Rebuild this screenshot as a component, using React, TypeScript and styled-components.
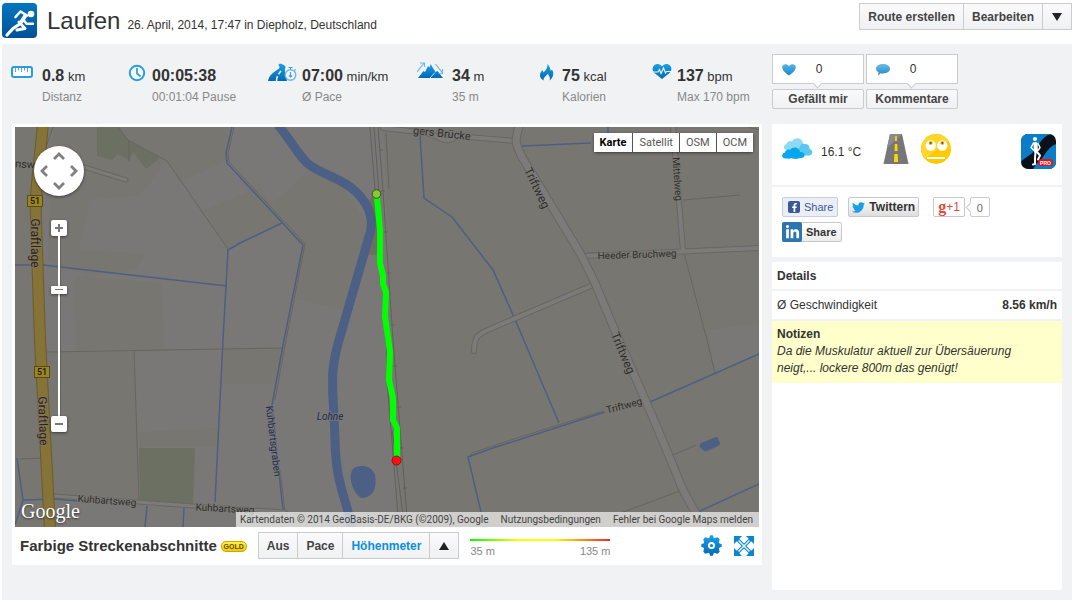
import React, { useState } from "react";
import styled, { createGlobalStyle, css } from "styled-components";
import { FaFacebookF, FaLinkedinIn, FaTwitter } from "react-icons/fa";

const GlobalStyle = createGlobalStyle`
  * { box-sizing: border-box; }
  body {
    margin: 0;
    background: #fff;
    color: #333;
    font: 12px/16px "Liberation Sans", Arial, sans-serif;
  }
  button, input { font: inherit; color: inherit; margin: 0; }
  button { cursor: pointer; }
  h1, h2, p, dl, dd, dt { margin: 0; }
  a { color: inherit; text-decoration: none; }
  svg { display: block; flex: none; }
`;

const Page = styled.div`
  padding: 0 2px 2px;
`;

const Header = styled.header`
  display: flex;
  align-items: flex-start;
  height: 44px;
  padding-top: 3px;
`;

const Title = styled.div`
  display: flex;
  align-items: baseline;
  flex: 1;
  gap: 7px;
  padding: 4px 0 0 10px;
  white-space: nowrap;

  h1 {
    font-size: 24px;
    line-height: 28px;
    font-weight: normal;
  }
`;

const ButtonGroup = styled.div`
  display: flex;
`;

const GroupButton = styled.button<{ $active?: boolean }>`
  height: 27px;
  padding: 0 8px;
  border: 1px solid #ccc;
  background: linear-gradient(#fafafb, #f0f1f3);
  color: ${(p) => (p.$active ? "#0d8fdc" : "#444")};
  font-weight: bold;
  white-space: nowrap;

  & + & { margin-left: -1px; }
`;

const ArrowButton = styled(GroupButton)`
  width: 30px;
  padding: 0 9px;
`;

const Body = styled.main`
  padding: 10px;
  background: #f1f2f4;
`;

const Summary = styled.div`
  display: flex;
  gap: 10px;
  height: 70px;
`;

const Stats = styled.dl`
  display: grid;
  flex: 1;
  grid-template-columns: 110fr 150fr 150fr 110fr 115fr 120fr;
  margin-left: -5px;
  padding-top: 8px;
`;

const StatItem = styled.div`
  display: grid;
  grid-template-columns: 30px 1fr;
  column-gap: 5px;
  align-content: start;
  white-space: nowrap;

  svg { grid-row: 1 / 3; }
`;

const StatValue = styled.dd`
  padding-top: 2px;
  font-size: 13px;
  line-height: 24px;

  strong { font-size: 16px; }
`;

const StatLabel = styled.dt`
  grid-column: 2;
  grid-row: 2;
  color: #888;
  line-height: 16px;
`;

const Reactions = styled.div`
  display: flex;
  gap: 2px;
  width: 290px;
`;

const Reaction = styled.div`
  display: flex;
  flex-direction: column;
  gap: 5px;
  width: 92px;
`;

const CountBox = styled.div`
  position: relative;
  display: flex;
  align-items: center;
  height: 30px;
  padding-left: 9px;
  border: 1px solid #ccc;
  background: #fff;

  span {
    width: 46px;
    text-align: center;
  }

  &::after {
    content: "";
    position: absolute;
    left: 41px;
    bottom: -4px;
    width: 6px;
    height: 6px;
    transform: rotate(45deg);
    border: solid #ccc;
    border-width: 0 1px 1px 0;
    background: #fff;
  }
`;

const ReactionButton = styled.button`
  height: 20px;
  padding: 0;
  border: 1px solid #ccc;
  border-radius: 2px;
  background: linear-gradient(#fafafb, #f0f1f3);
  color: #444;
  font-weight: bold;
`;

const Columns = styled.div`
  display: flex;
  align-items: flex-start;
  gap: 10px;
`;

const MapCard = styled.section`
  flex: 1;
  min-width: 0;
  padding: 3px;
  background: #fff;
`;

const MapFrame = styled.div`
  position: relative;
  overflow: hidden;
  font-family: Roboto, sans-serif;

  > svg {
    width: 100%;
    height: 400px;
  }
`;

const PanControl = styled.div`
  position: absolute;
  left: 19px;
  top: 19px;
  display: grid;
  grid-template: repeat(3, 15px) / repeat(3, 15px);
  place-content: center;
  place-items: center;
  width: 50px;
  height: 50px;
  border-radius: 50%;
  background: #fff;
  box-shadow: 0 1px 3px rgba(0, 0, 0, 0.5);
`;

const PanButton = styled.button<{ $area: string }>`
  grid-area: ${(p) => p.$area};
  padding: 0;
  border: 0;
  background: none;
`;

const ZoomControl = styled.div`
  position: absolute;
  left: 36px;
  top: 93px;
  display: flex;
  flex-direction: column;
  width: 16px;
`;

const ZoomButton = styled.button`
  display: grid;
  place-items: center;
  width: 16px;
  height: 16px;
  padding: 0;
  border: 0;
  border-radius: 2px;
  background: #fff;
  box-shadow: 0 1px 3px rgba(0, 0, 0, 0.5);
`;

const ZoomSlider = styled.input`
  appearance: none;
  writing-mode: vertical-lr;
  direction: rtl;
  width: 16px;
  height: 180px;
  background: linear-gradient(90deg, transparent 7px, #fff 7px 9px, #64625e 9px 10px, transparent 10px);

  &::-webkit-slider-thumb {
    appearance: none;
    width: 16px;
    height: 8px;
    border-radius: 1px;
    background: linear-gradient(#777, #777) center / 8px 1px no-repeat #fff;
    box-shadow: 0 1px 3px rgba(0, 0, 0, 0.5);
  }
`;

const MapTypes = styled.div`
  position: absolute;
  right: 6px;
  top: 6px;
  display: flex;
  gap: 1px;
  border-radius: 2px;
  background: #55534f;
  box-shadow: 0 1px 3px rgba(0, 0, 0, 0.5);
`;

const MapType = styled.button<{ $active: boolean }>`
  height: 19px;
  padding: 0 6px;
  border: 0;
  background: #fff;
  color: ${(p) => (p.$active ? "#000" : "#565656")};
  font-size: 11px;
  font-weight: ${(p) => (p.$active ? "bold" : "normal")};
`;

const MapLogo = styled.a`
  position: absolute;
  left: 6px;
  bottom: 4px;
  color: #fff;
  font: 20px/24px "Liberation Serif", serif;
  text-shadow: 0 1px 2px #333;
`;

const Attribution = styled.div`
  position: absolute;
  right: 0;
  bottom: 0;
  display: flex;
  gap: 12px;
  height: 15px;
  padding: 0 6px 0 4px;
  background: rgba(245, 245, 245, 0.7);
  color: #444;
  font-size: 10px;
  line-height: 16px;
  white-space: nowrap;
`;

const MapFooter = styled.div`
  display: flex;
  align-items: center;
  padding: 5px 5px 3px;

  h2 {
    font-size: 15px;
    line-height: 20px;
    white-space: nowrap;
  }
`;

const GoldBadge = styled.span`
  width: 26px;
  height: 11px;
  margin: 2px 11px 0 4px;
  border: 1px solid #c9a800;
  border-radius: 5px;
  background: linear-gradient(#fff04a, #f2c800);
  color: #5d4c00;
  font-size: 7px;
  line-height: 9px;
  font-weight: bold;
  text-align: center;
`;

const Legend = styled.div`
  display: flex;
  flex-wrap: wrap;
  justify-content: space-between;
  width: 140px;
  margin: 5px auto 0 11px;
  color: #888;
  font-size: 11px;
  line-height: 14px;

  &::before {
    content: "";
    width: 100%;
    height: 2px;
    margin-bottom: 3px;
    background: linear-gradient(90deg, #0f0, #ff0 35%, #ff0 60%, #f22);
  }
`;

const IconButton = styled.button`
  margin-left: 12px;
  padding: 0;
  border: 0;
  background: none;
`;

const Sidebar = styled.aside`
  display: flex;
  flex-direction: column;
  width: 290px;
`;

const Panel = styled.section`
  background: #fff;
`;

const Conditions = styled(Panel)`
  display: flex;
  align-items: flex-start;
  height: 61px;
  margin-bottom: 2px;
  padding: 10px 6px 0 10px;
`;

const Temperature = styled.span`
  margin: 10px 22px 0 8px;
`;

const FaceWrap = styled.span`
  margin-left: 12px;
`;

const AppIcon = styled.a`
  margin-left: auto;
`;

const Share = styled(Panel)`
  display: flex;
  flex-wrap: wrap;
  align-content: flex-start;
  gap: 5px 10px;
  height: 70px;
  margin-bottom: 5px;
  padding: 10px;
`;

const shareColors = {
  facebook: css`
    padding: 0 4px 0 5px;
    border-color: #c3cfe8;
    background: #eceef5;
    color: #3b5998;
  `,
  twitter: css`
    padding: 0 3px;
    background: linear-gradient(#fff, #dedede);
    font-size: 12px;
    font-weight: bold;
  `,
  google: css`
    margin-left: 4px;
    padding: 0 4px;
    background: #fff;
    color: #dd4b39;
    font-size: 12px;
  `,
  linkedin: css`
    padding: 0 4px 0 0;
    background: linear-gradient(#fff, #ececec);
    font-weight: bold;
  `,
};

const ShareButton = styled.button<{ $kind: keyof typeof shareColors }>`
  display: flex;
  align-items: center;
  gap: 4px;
  height: 20px;
  border: 1px solid #c8c8c8;
  border-radius: 2px;
  font-size: 11px;
  line-height: 18px;
  ${(p) => shareColors[p.$kind]}
`;

const PlusOne = styled.div`
  display: flex;
  gap: 5px;
`;

const PlusMark = styled.span`
  font: bold 16px/16px "Liberation Serif", serif;

  & + span { margin-left: -4px; }
`;

const Bubble = styled.span`
  position: relative;
  width: 20px;
  height: 20px;
  border: 1px solid #ccc;
  border-radius: 2px;
  color: #666;
  font-size: 11px;
  line-height: 20px;
  text-align: center;

  &::before {
    content: "";
    position: absolute;
    left: -4px;
    top: 6px;
    width: 6px;
    height: 6px;
    transform: rotate(45deg);
    border: solid #ccc;
    border-width: 0 0 1px 1px;
    background: #fff;
  }
`;

const BrandTile = styled.span<{ $size: number; $color: string }>`
  display: grid;
  place-items: center;
  width: ${(p) => p.$size}px;
  height: ${(p) => p.$size}px;
  border-radius: 2px;
  background: ${(p) => p.$color};
  color: #fff;
`;

const LinkedInTile = styled(BrandTile)`
  margin: 0 0 0 -1px;
`;

const DetailsPanel = styled(Panel)`
  min-height: 328px;

  h2 {
    padding: 6px 5px 5px;
    border-bottom: 2px solid #f1f2f4;
    font-size: 12px;
    line-height: 16px;
  }
`;

const DetailRow = styled.dl`
  display: flex;
  justify-content: space-between;
  padding: 6px 5px;
  border-bottom: 2px solid #f1f2f4;

  dd { font-weight: bold; }
`;

const Notes = styled.div`
  padding: 5px 5px 6px;
  background: #ffffcb;
  line-height: 17px;

  p { width: 260px; font-style: italic; }
`;

const BLUE = "#0c86cf";

const BlueGradient = ({ id }: { id: string }) => (
  <linearGradient id={id} x1="0" y1="0" x2="0" y2="1">
    <stop offset="0" stopColor="#1ba0e6" />
    <stop offset="1" stopColor="#0368b4" />
  </linearGradient>
);

const RunnerLogo = () => (
  <svg width="35" height="35" viewBox="0 0 35 35" aria-hidden="true">
    <defs>
      <linearGradient id="logo" x1="0" y1="0" x2="0" y2="1">
        <stop offset="0" stopColor="#0277bd" />
        <stop offset="1" stopColor="#01509a" />
      </linearGradient>
    </defs>
    <rect width="35" height="35" rx="4" fill="url(#logo)" />
    <circle cx="29" cy="11" r="3.300" fill="#fff" />
    <g fill="none" stroke="#fff" strokeLinejoin="round">
      <path d="M13.500 14l5-5.500 6.500 4" strokeWidth="2.600" strokeLinecap="round" />
      <path d="M23.500 12.500l-4.500 7" strokeWidth="4" />
      <path d="M22.500 18l2 2.800H31" strokeWidth="2.400" strokeLinecap="round" />
      <path d="M17 19l6 6.500-8 1.500" strokeWidth="3" strokeLinecap="round" />
      <path d="M17 21.500L11 25.500 5 32" strokeWidth="3.200" strokeLinecap="round" />
    </g>
  </svg>
);

const RulerIcon = () => (
  <svg width="30" height="24" viewBox="0 0 30 24" aria-hidden="true">
    <rect x="5" y="5" width="20" height="10" rx="2" fill="#fff" stroke="#2a9bdc" strokeWidth="2" />
    <path d="M8.500 6v4M11.500 6v2.500M14.500 6v4M17.500 6v2.500M20.500 6v4" stroke="#49aee4" />
  </svg>
);

const ClockIcon = () => (
  <svg width="30" height="24" viewBox="0 0 30 24" aria-hidden="true">
    <circle cx="20" cy="11" r="7.200" fill="#f8fcff" stroke="#2a9bdc" strokeWidth="2" />
    <path d="M20 6v5.500l3.500 3" fill="none" stroke="#2a9bdc" strokeWidth="1.700" />
  </svg>
);

const PaceIcon = () => (
  <svg width="30" height="24" viewBox="0 0 30 24" aria-hidden="true">
    <defs><BlueGradient id="pace" /></defs>
    <path d="M1 19c1-6 6-9 9-11 2-1.500 3-2 2.500-3L11.500 3c0-1 1.500-1.500 3-1.200l3 1.700c2 1.500 0 3 .5 6 1 3 1 6 2 9.500z" fill="url(#pace)" />
    <path d="M9.500 19c0-5 3-8 4.500-10" fill="none" stroke="#e6f2fa" strokeWidth="1.600" strokeDasharray="5 2" />
    <circle cx="23.500" cy="13" r="5.300" fill="#f1f2f4" stroke="#67b9e6" strokeWidth="1.400" />
    <path d="M23.500 7V5.500m-2 0h4M23.500 10v4.500m-1.500-1l1.500 1.500 1.500-1.500M27.500 8.500l1-1" fill="none" stroke="#409fd7" strokeWidth="1.100" />
  </svg>
);

const ElevationIcon = () => (
  <svg width="30" height="24" viewBox="0 0 30 24" aria-hidden="true">
    <defs><BlueGradient id="peaks" /></defs>
    <path d="M1 16l5.500-7 1.500 1 3-6 1.500 1.500L13.500 2l5 8 2-1 5.500 7z" fill="url(#peaks)" />
    <path d="M12.500 16.500l5.500-6" fill="none" stroke="#b9def2" />
    <path d="M0 10l7-9M3 1h4.500v4M18.500 2l7 9M25.500 7v4.500h-4" fill="none" stroke="#6cb9e3" strokeWidth="1.200" />
  </svg>
);

const FlameIcon = () => (
  <svg width="30" height="24" viewBox="0 0 30 24" aria-hidden="true">
    <defs><BlueGradient id="flame" /></defs>
    <path d="M16.500 18.500c-5-3-4-7.500-1-10.500l1 2.500c2-2 4-4 4-8.500 2 2 3 5 3 7l1.500-1.500c2 3 2 7.500-2.500 11 1.500-4-1-4-1.500-7-2 2.500-4.500 3.500-4.500 7z" fill="url(#flame)" />
  </svg>
);

const PulseIcon = () => (
  <svg width="30" height="24" viewBox="0 0 30 24" aria-hidden="true">
    <defs><BlueGradient id="pulse" /></defs>
    <path d="M20 17L12.500 11c-4-4-1-9 3-9 2 0 3.500 1 4.500 2.500C21 3 22.500 2 24.500 2c4 0 7 5 3 9z" fill="url(#pulse)" />
    <path d="M11 10h5l1.500-2.500 1.500 4L21.500 6l2 5 1-1.500H29" fill="none" stroke="#e8f5fc" strokeWidth="1.100" />
  </svg>
);

const HeartIcon = () => (
  <svg width="14" height="13" viewBox="0 0 14 13" aria-hidden="true">
    <defs><linearGradient id="heart" x1="0" y1="0" x2="0" y2="1"><stop offset="0" stopColor="#56b5e5" /><stop offset="1" stopColor="#1c86c7" /></linearGradient></defs>
    <path d="M7 12.500C4 10.500 0 7.500 .2 4 .5.800 5.200.500 7 3.200 8.800.500 13.500.800 13.800 4 14 7.500 10 10.500 7 12.500z" fill="url(#heart)" />
  </svg>
);

const CommentIcon = () => (
  <svg width="14" height="13" viewBox="0 0 14 13" aria-hidden="true">
    <defs><linearGradient id="comment" x1="0" y1="0" x2="0" y2="1"><stop offset="0" stopColor="#6cbfe8" /><stop offset="1" stopColor="#1c86c7" /></linearGradient></defs>
    <path d="M7 1c4 0 7 2 7 4.700S11 10.400 7 10.400c-.8 0-1.600 0-2.300-.2L2 12.500l.6-3.200C1 8.400 0 7 0 5.700 0 3 3 1 7 1z" fill="url(#comment)" />
  </svg>
);

const CloudIcon = () => (
  <svg width="31" height="35" viewBox="0 0 31 35" aria-hidden="true">
    <path d="M5 16C1 16 1 11 4.500 10 5 7.500 8 6.500 10 7.500 12 3 20 3 21 9L20 20H8z" fill="#8edaf4" />
    <path d="M17 14c1-3 3-5 6-4 3 0 5 2 4.500 5 4 1 3.500 6 0 6.500H18z" fill="#5cc7ee" />
    <path d="M4 24.500c-5 0-5-5-1-6C3.500 16 6 15 8 16c2-4 10-3 10 2 3-.5 5 1.500 4.500 3.500 0 2-2.500 2.500-4.500 2.500-4 1.500-7 1-8.500 0-2 1-3.500.5-5.500.5z" fill="#07a7ee" />
  </svg>
);

const RoadIcon = () => (
  <svg width="26" height="30" viewBox="0 0 26 30" aria-hidden="true">
    <path d="M7 0h12l6.500 30H.5z" fill="#777" />
    <path d="M7 0h12L4 14z" fill="#8b8b8b" />
    <path d="M12.200 2h1.500l.3 5h-2zM11.800 10h2.500l.3 7h-3zM11.400 20h3.300l.3 8h-4z" fill="#ffd500" />
  </svg>
);

const FaceIcon = () => (
  <svg width="30" height="30" viewBox="0 0 30 30" aria-hidden="true">
    <circle cx="15" cy="15" r="15" fill="#ffca00" />
    <path d="M0 15a15 15 0 0 1 27.500-8.500L4 25A15 15 0 0 1 0 15z" fill="#ffd52a" />
    <circle cx="9.700" cy="11.500" r="5.200" fill="#fff" />
    <circle cx="21.300" cy="11.500" r="5.200" fill="#fff" />
    <circle cx="9.700" cy="9" r="2" fill="#e8b800" />
    <circle cx="21.300" cy="9" r="2" fill="#e8b800" />
    <circle cx="9.700" cy="9" r="1" fill="#5d5a3a" />
    <circle cx="21.300" cy="9" r="1" fill="#5d5a3a" />
    <rect x="6" y="23" width="18" height="2" fill="#fff" />
  </svg>
);

const ProAppIcon = () => (
  <svg width="35" height="35" viewBox="0 0 35 35" aria-hidden="true">
    <clipPath id="app-clip"><rect width="35" height="35" rx="7" /></clipPath>
    <g clipPath="url(#app-clip)">
      <rect width="35" height="35" fill="#0b1118" />
      <path d="M0 0h31C20 2 18 12 13 17 9 22 4 23 0 28z" fill="#0a7cc8" />
      <path d="M35 10C25 14 23 25 16 29l-4 6h23z" fill="#0a7cc8" />
    </g>
    <circle cx="14" cy="5" r="2.100" fill="#fff" />
    <g fill="none" stroke="#fff" strokeLinecap="round" strokeLinejoin="round">
      <path d="M14.500 10l.5 7" strokeWidth="4" />
      <path d="M12.500 9l-2.500 4.500 2.500 2.500M17 9.500l2 4-2 3" strokeWidth="1.500" />
      <path d="M16 18l3 3.500-2 4M14.500 18l-.5 6v6l-2 .5" strokeWidth="2" />
    </g>
    <rect x="17" y="25" width="15" height="7" rx="3.500" fill="#e3131b" />
    <text x="24.500" y="30.500" textAnchor="middle" fill="#fff" fontSize="5" fontWeight="bold" fontFamily="Liberation Sans, sans-serif">PRO</text>
  </svg>
);

const GearIcon = () => (
  <svg width="21" height="21" viewBox="-10.500 -10.500 21 21" aria-hidden="true">
    <defs><BlueGradient id="gear" /></defs>
    <path
      d="M-1.300-10.200h2.600L2.400-7.300 6.300-8.200 8.200-6.300 7.300-2.400 10.200-1.300v2.600L7.300 2.400 8.200 6.300 6.300 8.200 2.400 7.300 1.300 10.200h-2.600L-2.400 7.300-6.300 8.200-8.200 6.300-7.300 2.400-10.200 1.300v-2.600L-7.300-2.400-8.200-6.300-6.300-8.200-2.400-7.300z"
      fill="url(#gear)"
    />
    <circle r="3.500" fill="#fff" />
    <circle r="1.600" fill={BLUE} />
  </svg>
);

const ExpandIcon = () => (
  <svg width="20" height="20" viewBox="0 0 20 20" aria-hidden="true">
    <path d="M0 0h8L0 8zM20 0v8L12 0zM0 20v-8l8 8zM20 20h-8l8-8z" fill={BLUE} />
    <path d="M3 3l14 14M17 3L3 17" stroke={BLUE} strokeWidth="3.600" />
    <path d="M4.500 4.500l11 11M15.500 4.500l-11 11" stroke="#e4f3fb" strokeWidth="1.500" />
  </svg>
);

const Triangle = ({ up = false }: { up?: boolean }) => (
  <svg width="10" height="8" viewBox="0 0 10 8" aria-hidden="true">
    <path d={up ? "M0 8l5-8 5 8z" : "M0 0h10L5 8z"} fill="#222" />
  </svg>
);

const Chevron = ({ angle }: { angle: number }) => (
  <svg width="12" height="12" viewBox="-6 -6 12 12" aria-hidden="true">
    <path d="M-5 3L0-2l5 5" fill="none" stroke="#808080" strokeWidth="2.800" transform={`rotate(${angle})`} />
  </svg>
);

const WATER = "#4c5f84";

const canals = [
  "M15 265H33M43 265L227 286",
  "M232 127L226 153 227 163 303 245 284 340 272 405 279 473 283 510",
  "M282 223L240 243 228 250 223 340 215 502",
  "M17 458L23 500 15 525M23 500L55 499 77 501M147 506L145 527M184 508L183 527",
  "M420 135L424 198 452 217 493 270 514 317 559 423",
  "M605 412L490 449 468 457 481 512",
  "M522 146L591 143M608 127V133M582 254L597 253",
  "M650 402L759 354M700 511L759 484",
];

const paths = [
  "M118 127L128 140 167 161 228 249M129 140V162",
  "M53 127L45 150M234 127L228 153 229 162 305 244 286 340 275 400M280 470L285 512",
  "M47 352L283 348M134 350L139 500M20 459L41 458",
  "M684 253L707 340 715 373M683 200L740 195M673 455L696 445M623 512L680 491M748 127L759 130",
  "M603 411L520 437 472 453 468 458M386 133L389 189",
];

const rails = [
  "M370 127L375 190M374 127L379 193",
  "M378 127L383 191 393 340 407 517",
  "M385 300L388 393 398 515M392 430L403 515",
  "M379 150h4M381 191h4M384 232h4M387 273h4M391 325h4M393 366h4M397 407h4M400 448h4M403 488h4",
];

const roads: { d: string; width: number }[] = [
  { d: "M593 285L490 329C478 334 474 337 474 351", width: 4 },
  { d: "M583 256L759 248M673 127L683 251", width: 4 },
  { d: "M383 128L427 133C440 136 446 146 456 136L515 141", width: 4 },
  { d: "M53 496L138 502 193 506 285 512", width: 3 },
  { d: "M84 167L126 180", width: 3 },
  { d: "M519 127C514 142 516 145 522 157L580 253 595 283 613 326 657 427 683 490 705 530", width: 7 },
];

const mapLabels: { text: string; x: number; y: number; angle: number; size: number; color?: string; italic?: boolean }[] = [
  { text: "Triftweg", x: 537, y: 188, angle: 64, size: 12 },
  { text: "Triftweg", x: 623, y: 353, angle: 67, size: 12 },
  { text: "Triftweg", x: 624, y: 405, angle: -15, size: 10 },
  { text: "Heeder Bruchweg", x: 637, y: 254, angle: -2, size: 10 },
  { text: "Mittelweg", x: 678, y: 179, angle: 86, size: 10 },
  { text: "gers Brücke", x: 442, y: 133, angle: 6, size: 11 },
  { text: "Kuhbartsweg", x: 107, y: 500, angle: 4, size: 10 },
  { text: "Kuhbartsweg", x: 225, y: 508, angle: 3, size: 10 },
  { text: "nswe", x: 28, y: 164, angle: 3, size: 11 },
  { text: "Graftlage", x: 35, y: 243, angle: 90, size: 12, color: "#33220c" },
  { text: "Graftlage", x: 43, y: 421, angle: 88, size: 12, color: "#33220c" },
  { text: "Kuhbartsgraben", x: 274, y: 441, angle: 83, size: 10, color: "#1e2d4e" },
  { text: "Lohne", x: 330, y: 416, angle: 0, size: 10, color: "#1e2d4e", italic: true },
];

const RouteMap = () => (
  <svg viewBox="15 127 744 400" preserveAspectRatio="xMidYMid slice" role="img" aria-label="Streckenkarte">
    <rect x="-400" y="0" width="1600" height="700" fill="#7a7876" />
    <g fill="#787670">
      <path d="M378 0H1200V700H407L393 340z" />
      <path d="M15 127H40L30 210 48 527H15zM53 127H230L227 160 180 182 167 161 140 195 90 200 78 250 145 254 135 270 75 277 76 350H164L162 283 90 277 48 260z" />
      <path d="M204 210L260 187 303 245 292 298 345 310 371 230 340 183 308 172 272 204 282 223 229 250z" />
      <path d="M47 352H134L139 500 53 496zM139 432L218 428V447H139zM224 350L283 348 275 384H222z" />
    </g>
    <path d="M707 330L759 323V354L715 373z" fill="#7a7876" />
    <g fill="#6b7063">
      <path d="M97 127H118L128 140 160 158 146 169 133 152 129 160 118 154 112 160 97 156z" />
      <path d="M139 448H195L193 504 140 500z" />
      <path d="M368 200L379 193 383 255H368z" />
    </g>
    <g fill="none" stroke="#67655e">{paths.map((d) => <path key={d} d={d} />)}</g>
    <g fill="none" stroke={WATER} strokeWidth="1.500">{canals.map((d) => <path key={d} d={d} />)}</g>
    {roads.map(({ d, width }) => (
      <g key={d} fill="none" strokeLinecap="round">
        <path d={d} stroke="#696761" strokeWidth={width + 2} />
        <path d={d} stroke="#7d7b79" strokeWidth={width} />
      </g>
    ))}
    <path d="M278 125C290 139 297 153 307 163 320 175 348 178 363 200 373 213 373 228 368 240L342 330C328 375 333 380 335 440 336 487 346 495 352 530" fill="none" stroke={WATER} strokeWidth="9" />
    <path d="M354 468C362 464 372 466 375 475 377 487 374 497 363 498 354 497 346 475 354 468zM701 443L716 437Q718 437 718 439L720 443Q720 445 718 446L707 451Q704 452 700 447 699 445 701 443z" fill={WATER} />
    <g fill="none" stroke="#62605a">{rails.map((d) => <path key={d} d={d} />)}</g>
    <g fill="none">
      <path d="M43 120C41 160 34 185 36 220L40 340 50 530" stroke="#6b5c2c" strokeWidth="12" />
      <path d="M43 120C41 160 34 185 36 220L40 340 50 530" stroke="#867338" strokeWidth="10" />
    </g>
    {[{ x: 35, y: 201 }, { x: 42, y: 372 }].map(({ x, y }) => (
      <g key={y}>
        <rect x={x - 7.500} y={y - 5.500} width="15" height="11" fill="#9a8526" stroke="#5a4b10" />
        <text x={x} y={y + 3} textAnchor="middle" fontSize="9" fontWeight="500" fill="#1c1804">51</text>
      </g>
    ))}
    {mapLabels.map(({ text, x, y, angle, size, color = "#2f2e2b", italic }) => (
      <text
        key={`${x}-${y}`}
        transform={`translate(${x} ${y}) rotate(${angle})`}
        y={4}
        textAnchor="middle"
        fontSize={size}
        fontStyle={italic ? "italic" : "normal"}
        fill={color}
        stroke="#7c7a76"
        strokeWidth="2"
        strokeOpacity=".7"
        paintOrder="stroke"
      >
        {text}
      </text>
    ))}
    <path d="M377 198L380 230 380 263 383 276 383 284 386 292 385 317 388 337 390 352 389 380 393 398 393 420 397 428 397 457" fill="none" stroke="#0f0" strokeWidth="6" strokeLinejoin="round" />
    <circle cx="376.500" cy="194" r="4.300" fill="#82cb32" stroke="#35541a" />
    <circle cx="396.500" cy="460.500" r="4.500" fill="#fa1010" stroke="#8d1212" />
  </svg>
);

const stats = [
  { icon: <RulerIcon />, value: "0.8", unit: "km", label: "Distanz" },
  { icon: <ClockIcon />, value: "00:05:38", unit: "", label: "00:01:04 Pause" },
  { icon: <PaceIcon />, value: "07:00", unit: "min/km", label: "Ø Pace" },
  { icon: <ElevationIcon />, value: "34", unit: "m", label: "35 m" },
  { icon: <FlameIcon />, value: "75", unit: "kcal", label: "Kalorien" },
  { icon: <PulseIcon />, value: "137", unit: "bpm", label: "Max 170 bpm" },
];

const panDirections = [
  { name: "Nach oben", area: "1 / 2", angle: 0 },
  { name: "Nach links", area: "2 / 1", angle: -90 },
  { name: "Nach rechts", area: "2 / 3", angle: 90 },
  { name: "Nach unten", area: "3 / 2", angle: 180 },
];

export default function App() {
  const [mapType, setMapType] = useState("Karte");
  const [overlay, setOverlay] = useState("Höhenmeter");

  return (
    <Page>
      <GlobalStyle />
      <Header>
        <RunnerLogo />
        <Title>
          <h1>Laufen</h1>
          <span>26. April, 2014, 17:47 in Diepholz, Deutschland</span>
        </Title>
        <ButtonGroup>
          <GroupButton>Route erstellen</GroupButton>
          <GroupButton>Bearbeiten</GroupButton>
          <ArrowButton aria-label="Weitere Aktionen"><Triangle /></ArrowButton>
        </ButtonGroup>
      </Header>

      <Body>
        <Summary>
          <Stats>
            {stats.map(({ icon, value, unit, label }) => (
              <StatItem key={label}>
                {icon}
                <StatLabel>{label}</StatLabel>
                <StatValue><strong>{value}</strong> {unit}</StatValue>
              </StatItem>
            ))}
          </Stats>
          <Reactions>
            <Reaction>
              <CountBox><HeartIcon /><span>0</span></CountBox>
              <ReactionButton>Gefällt mir</ReactionButton>
            </Reaction>
            <Reaction>
              <CountBox><CommentIcon /><span>0</span></CountBox>
              <ReactionButton>Kommentare</ReactionButton>
            </Reaction>
          </Reactions>
        </Summary>

        <Columns>
          <MapCard>
            <MapFrame>
              <RouteMap />
              <PanControl>
                {panDirections.map(({ name, area, angle }) => (
                  <PanButton key={name} aria-label={name} $area={area}><Chevron angle={angle} /></PanButton>
                ))}
              </PanControl>
              <ZoomControl>
                <ZoomButton aria-label="Vergrößern">
                  <svg width="8" height="8" viewBox="0 0 8 8"><path d="M0 4h8M4 0v8" stroke="#777" strokeWidth="2" /></svg>
                </ZoomButton>
                <ZoomSlider type="range" min="0" max="100" defaultValue="71" aria-label="Zoomstufe" />
                <ZoomButton aria-label="Verkleinern">
                  <svg width="8" height="8" viewBox="0 0 8 8"><path d="M0 4h8" stroke="#777" strokeWidth="2" /></svg>
                </ZoomButton>
              </ZoomControl>
              <MapTypes>
                {["Karte", "Satellit", "OSM", "OCM"].map((name) => (
                  <MapType key={name} $active={name === mapType} onClick={() => setMapType(name)}>{name}</MapType>
                ))}
              </MapTypes>
              <MapLogo href="#maps">Google</MapLogo>
              <Attribution>
                <span>Kartendaten © 2014 GeoBasis-DE/BKG (©2009), Google</span>
                <a href="#terms">Nutzungsbedingungen</a>
                <a href="#report">Fehler bei Google Maps melden</a>
              </Attribution>
            </MapFrame>
            <MapFooter>
              <h2>Farbige Streckenabschnitte</h2>
              <GoldBadge>GOLD</GoldBadge>
              <ButtonGroup>
                {["Aus", "Pace", "Höhenmeter"].map((name) => (
                  <GroupButton key={name} $active={name === overlay} aria-pressed={name === overlay} onClick={() => setOverlay(name)}>
                    {name}
                  </GroupButton>
                ))}
                <ArrowButton aria-label="Weitere Overlays"><Triangle up /></ArrowButton>
              </ButtonGroup>
              <Legend><span>35 m</span><span>135 m</span></Legend>
              <IconButton aria-label="Einstellungen"><GearIcon /></IconButton>
              <IconButton aria-label="Vollbild"><ExpandIcon /></IconButton>
            </MapFooter>
          </MapCard>

          <Sidebar>
            <Conditions>
              <CloudIcon />
              <Temperature>16.1 °C</Temperature>
              <RoadIcon />
              <FaceWrap><FaceIcon /></FaceWrap>
              <AppIcon href="#pro" aria-label="PRO App"><ProAppIcon /></AppIcon>
            </Conditions>
            <Share>
              <ShareButton $kind="facebook">
                <BrandTile $size={12} $color="#3b5998"><FaFacebookF size={9} /></BrandTile>Share
              </ShareButton>
              <ShareButton $kind="twitter"><FaTwitter size={13} color="#1b9fe0" />Twittern</ShareButton>
              <PlusOne>
                <ShareButton $kind="google"><PlusMark>g</PlusMark><span>+1</span></ShareButton>
                <Bubble>0</Bubble>
              </PlusOne>
              <ShareButton $kind="linkedin">
                <LinkedInTile $size={20} $color="#2f75ad"><FaLinkedinIn size={15} /></LinkedInTile>Share
              </ShareButton>
            </Share>
            <DetailsPanel>
              <h2>Details</h2>
              <DetailRow><dt>Ø Geschwindigkeit</dt><dd>8.56 km/h</dd></DetailRow>
              <Notes>
                <strong>Notizen</strong>
                <p>Da die Muskulatur aktuell zur Übersäuerung neigt,... lockere 800m das genügt!</p>
              </Notes>
            </DetailsPanel>
          </Sidebar>
        </Columns>
      </Body>
    </Page>
  );
}
